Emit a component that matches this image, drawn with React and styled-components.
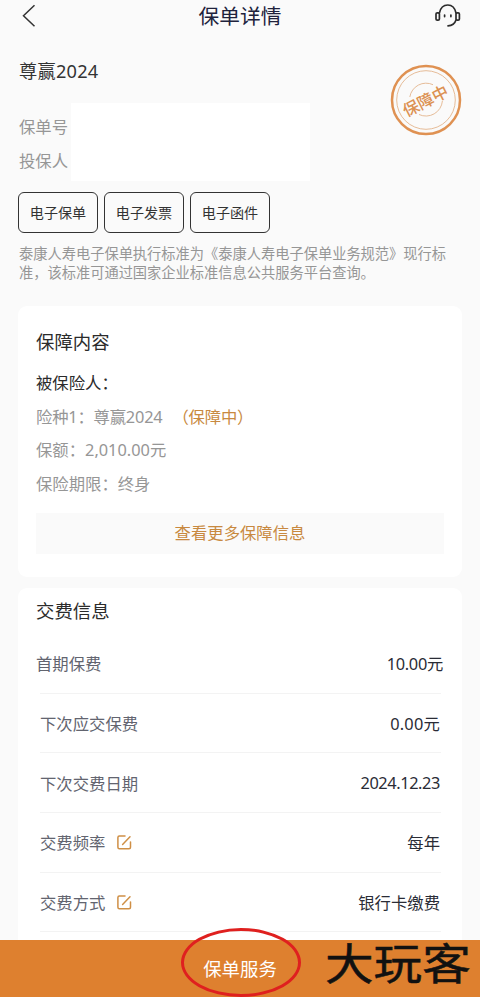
import React from "react";
import styled, { createGlobalStyle } from "styled-components";

const payRows = [
  { label: "首期保费", value: "10.00元", wide: true, spacing: "-0.3px" },
  { label: "下次应交保费", value: "0.00元", spacing: "0.2px" },
  { label: "下次交费日期", value: "2024.12.23", spacing: "-0.4px" },
  { label: "交费频率", value: "每年", edit: true },
  { label: "交费方式", value: "银行卡缴费", edit: true },
];

const EditIcon = () => (
  <svg width="15" height="15" viewBox="0 0 15 15" fill="none" stroke="#cf8f45" strokeWidth="1.5" strokeLinecap="round">
    <path d="M8 1H2.4Q.9 1 .9 2.5V12.2Q.9 13.7 2.4 13.7H12Q13.5 13.7 13.5 12.2V7" />
    <path d="M5.6 9.4L13 1.8" />
  </svg>
);

const App = () => {
  return (
    <Wrapper>
      <GlobalStyle />
      <Header>
        <svg width="14" height="24" viewBox="0 0 14 24" fill="none" stroke="#333" strokeWidth="1.5">
          <path d="M12.5 1.2L1.5 11.8L12.5 22.2" />
        </svg>
        <Title>保单详情</Title>
        <svg width="26" height="24" viewBox="0 0 26 24" fill="none" stroke="#2c2c2c" strokeWidth="1.7" strokeLinecap="round">
          <rect x="1" y="8.8" width="3.4" height="7.4" rx="1.3" />
          <rect x="21" y="8.8" width="3.4" height="7.4" rx="1.3" />
          <path d="M4.4 9C5.4 4.2 8.6 1 12.8 1S20 4.2 21 9" />
          <path d="M21 16.1C19.8 19.8 16.6 21.8 13 21.8" />
          <path d="M9.6 11V12.6M15.9 11V12.6" />
        </svg>
      </Header>

      <Summary>
        <Product>尊赢2024</Product>
        <Info>
          <InfoLabels>
            <Line>保单号</Line>
            <Line>投保人</Line>
          </InfoLabels>
          <Mask />
        </Info>
        <BtnLine>
          <DocBtn>电子保单</DocBtn>
          <DocBtn>电子发票</DocBtn>
          <DocBtn>电子函件</DocBtn>
        </BtnLine>
        <Notice>
          泰康人寿电子保单执行标准为《泰康人寿电子保单业务规范》现行标
          <br />
          准，该标准可通过国家企业标准信息公共服务平台查询。
        </Notice>
        <Stamp>
          <svg width="72" height="72" viewBox="0 0 72 72" fill="none" stroke="#df9152">
            <circle cx="36" cy="36" r="34" strokeWidth="2.5" />
            <circle cx="36" cy="36" r="29.3" strokeWidth="0.9" stroke="#e3b48c" />
            <path d="M19.8 33A16.5 16.5 0 0 1 43 20.7" strokeWidth="0.9" stroke="#e3b48c" />
            <path d="M52.4 37A16.5 16.5 0 0 1 29 50.5" strokeWidth="0.9" stroke="#e3b48c" />
          </svg>
          <StampText>保障中</StampText>
        </Stamp>
      </Summary>

      <Card $height="271px">
        <Heading $top="22px">保障内容</Heading>
        <Lines>
          <Line $color="#2b2b2b">被保险人：</Line>
          <Line $spacing="-0.2px">
            险种1：尊赢2024<Status>（保障中）</Status>
          </Line>
          <Line>保额：2,010.00元</Line>
          <Line>保险期限：终身</Line>
        </Lines>
        <MoreBtn>查看更多保障信息</MoreBtn>
      </Card>

      <Card $height="372px">
        <Heading $top="9px">交费信息</Heading>
        <PayList>
          {payRows.map((row) => (
            <PayRow key={row.label}>
              <PayContent $wide={row.wide}>
                <PayLabel>
                  {row.label}
                  {row.edit && <EditIcon />}
                </PayLabel>
                <PayValue $spacing={row.spacing}>{row.value}</PayValue>
              </PayContent>
            </PayRow>
          ))}
        </PayList>
      </Card>

      <Footer>
        <FooterText>保单服务</FooterText>
        <Ring />
        <Watermark>大玩客</Watermark>
      </Footer>
    </Wrapper>
  );
};

export default App;

const GlobalStyle = createGlobalStyle`
  * {
    box-sizing: border-box;
  }
  body {
    margin: 0;
    background: #fafafa;
  }
`;
const Wrapper = styled.div`
  width: 480px;
  height: 997px;
  overflow: hidden;
  display: flex;
  flex-direction: column;
  background: #fafafa;
  font-family: "Noto Sans", "Noto Sans CJK SC", sans-serif;
  font-size: 16.35px;
  white-space: nowrap;
`;
const Header = styled.header`
  height: 32px;
  flex: none;
  padding: 0 19px 0 22px;
  display: flex;
  align-items: center;
  justify-content: space-between;
`;
const Title = styled.div`
  margin-left: 9px;
  color: #20223c;
  font-size: 20.7px;
  line-height: 30px;
`;
const Summary = styled.section`
  position: relative;
  height: 274px;
  flex: none;
  padding: 26px 19px 0;
`;
const Product = styled.div`
  color: #333;
  font-size: 18.2px;
  line-height: 26px;
  letter-spacing: 0.25px;
`;
const Info = styled.div`
  display: flex;
  height: 78px;
  margin-top: 19px;
`;
const InfoLabels = styled.div`
  width: 52px;
  padding-top: 8px;
`;
const Mask = styled.div`
  width: 239px;
  background: #fff;
`;
const Line = styled.div`
  height: 33.7px;
  line-height: 33.7px;
  letter-spacing: ${(props) => props.$spacing || "normal"};
  color: ${(props) => props.$color || "#969696"};
`;
const BtnLine = styled.div`
  display: flex;
  gap: 6px;
  margin-top: 11px;
  margin-left: -1px;
`;
const DocBtn = styled.button`
  width: 80px;
  height: 41px;
  padding: 0 0 2px;
  border: 1.5px solid #333;
  border-radius: 6px;
  background: transparent;
  color: #333;
  font-family: inherit;
  font-size: 14.1px;
`;
const Notice = styled.p`
  margin: 12px 0 0;
  color: #969696;
  font-size: 14.24px;
  line-height: 18.7px;
`;
const Stamp = styled.div`
  position: absolute;
  top: 32px;
  left: 390px;
  width: 72px;
  height: 72px;
`;
const StampText = styled.div`
  position: absolute;
  inset: 0 2px 0 0;
  display: flex;
  align-items: center;
  justify-content: center;
  color: #dc9152;
  font-size: 16.2px;
  font-weight: 500;
  transform: rotate(-27deg);
`;
const Card = styled.section`
  width: 444px;
  height: ${(props) => props.$height};
  flex: none;
  margin: 0 0 11px 18px;
  padding: 0 18px;
  overflow: hidden;
  border-radius: 9px;
  background: #fff;
`;
const Heading = styled.div`
  margin-top: ${(props) => props.$top};
  color: #2b2b2b;
  font-size: 18.4px;
  line-height: 28px;
`;
const Lines = styled.div`
  margin-top: 11px;
`;
const Status = styled.span`
  margin-left: 10px;
  color: #c88940;
`;
const MoreBtn = styled.div`
  height: 41px;
  margin-top: 11px;
  background: #fafafa;
  color: #c88940;
  line-height: 41px;
  text-align: center;
`;
const PayList = styled.div`
  margin: 9px 3px 0 4px;
`;
const PayRow = styled.div`
  height: 59.7px;
  border-bottom: 1px solid #f3f3f3;
`;
const PayContent = styled.div`
  height: 100%;
  margin: ${(props) => (props.$wide ? "0 -2px 0 -4px" : "0 1px 0 0")};
  display: flex;
  align-items: center;
  justify-content: space-between;
`;
const PayLabel = styled.div`
  display: flex;
  align-items: center;
  gap: 12px;
  color: #62646f;
`;
const PayValue = styled.div`
  color: #2a2c36;
  letter-spacing: ${(props) => props.$spacing || "normal"};
`;
const Footer = styled.footer`
  position: absolute;
  top: 940px;
  left: 0;
  width: 480px;
  height: 57px;
  background: #de802f;
  display: flex;
  justify-content: center;
`;
const FooterText = styled.div`
  color: #fff;
  font-size: 18.4px;
  line-height: 57px;
`;
const Ring = styled.div`
  position: absolute;
  top: -12px;
  left: 181px;
  width: 120px;
  height: 69px;
  border: 3px solid #df201f;
  border-radius: 50%;
`;
const Watermark = styled.div`
  position: absolute;
  top: -3px;
  left: 325px;
  color: #111;
  font-family: "Noto Sans CJK SC", sans-serif;
  font-size: 43px;
  font-weight: 400;
  line-height: 48px;
  -webkit-text-stroke: 0.5px #111;
  stroke-linejoin: round;
  transform: scaleX(1.13);
  transform-origin: 0 50%;
`;
